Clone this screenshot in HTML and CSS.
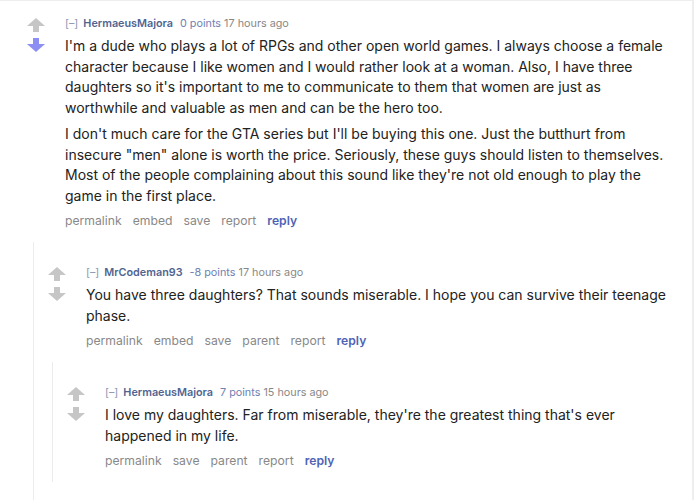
FILE: index.html
```html
<!DOCTYPE html>
<html lang="en">
<head>
	<meta charset="UTF-8"/>
	<title>comments</title>
	<link rel="stylesheet" href="styles.css">
</head>
<body>

<div class="listing">

<div class="comment top">
	<div class="row">
		<div class="midcol">
			<svg class="arrow" viewBox="0 0 18 14"><path class="up" d="M9 0 L18 8 L12 8 L12 14 L6 14 L6 8 L0 8 Z"/></svg>
			<svg class="arrow" viewBox="0 0 18 14"><path class="down voted" d="M6 0 L12 0 L12 6 L18 6 L9 14 L0 6 L6 6 Z"/></svg>
		</div>
		<div class="entry">
			<p class="tagline"><span class="expand">[&ndash;]</span> <a class="author">HermaeusMajora</a> <span class="score">0 points</span> <span class="time">17 hours ago</span></p>
			<div class="md">
				<p>I'm a dude who plays a lot of RPGs and other open world games. I always choose a female character because I like women and I would rather look at a woman. Also, I have three daughters so it's important to me to communicate to them that women are just as worthwhile and valuable as men and can be the hero too.</p>
				<p>I don't much care for the GTA series but I'll be buying this one. Just the butthurt from insecure "men" alone is worth the price. Seriously, these guys should listen to themselves. Most of the people complaining about this sound like they're not old enough to play the game in the first place.</p>
			</div>
			<ul class="buttons">
				<li>permalink</li>
				<li>embed</li>
				<li>save</li>
				<li>report</li>
				<li class="reply">reply</li>
			</ul>
		</div>
	</div>

	<div class="child outer">
		<div class="comment">
			<div class="row">
				<div class="midcol">
					<svg class="arrow" viewBox="0 0 18 14"><path class="up" d="M9 0 L18 8 L12 8 L12 14 L6 14 L6 8 L0 8 Z"/></svg>
					<svg class="arrow" viewBox="0 0 18 14"><path class="down" d="M6 0 L12 0 L12 6 L18 6 L9 14 L0 6 L6 6 Z"/></svg>
				</div>
				<div class="entry">
					<p class="tagline"><span class="expand">[&ndash;]</span> <a class="author">MrCodeman93</a> <span class="score">-8 points</span> <span class="time">17 hours ago</span></p>
					<div class="md">
						<p>You have three daughters? That sounds miserable. I hope you can survive their teenage phase.</p>
					</div>
					<ul class="buttons">
						<li>permalink</li>
						<li>embed</li>
						<li>save</li>
						<li>parent</li>
						<li>report</li>
						<li class="reply">reply</li>
					</ul>
				</div>
			</div>

			<div class="child inner">
				<div class="comment">
					<div class="row">
						<div class="midcol">
							<svg class="arrow" viewBox="0 0 18 14"><path class="up" d="M9 0 L18 8 L12 8 L12 14 L6 14 L6 8 L0 8 Z"/></svg>
							<svg class="arrow" viewBox="0 0 18 14"><path class="down" d="M6 0 L12 0 L12 6 L18 6 L9 14 L0 6 L6 6 Z"/></svg>
						</div>
						<div class="entry">
							<p class="tagline"><span class="expand">[&ndash;]</span> <a class="author">HermaeusMajora</a> <span class="score">7 points</span> <span class="time">15 hours ago</span></p>
							<div class="md">
								<p>I love my daughters. Far from miserable, they're the greatest thing that's ever happened in my life.</p>
							</div>
							<ul class="buttons">
								<li>permalink</li>
								<li>save</li>
								<li>parent</li>
								<li>report</li>
								<li class="reply">reply</li>
							</ul>
						</div>
					</div>
				</div>
			</div>
		</div>
	</div>
</div>

</div>

</body>
</html>
```

FILE: styles.css
```css
html {
	font-family: Inter, "Noto Sans", sans-serif;
}
body {
	margin: 0;
	padding: 0;
	background: #fff;
}
.listing {
	height: 500px;
	box-sizing: border-box;
	border-top: 1px solid #eeeeee;
	border-right: 2px solid #eeeeee;
	overflow: hidden;
}
.comment {
	padding-left: 6px;
}
.comment.top {
	padding-left: 19px;
	padding-top: 15px;
}
.row {
	display: flex;
}
.midcol {
	width: 46px;
	flex: none;
	display: flex;
	flex-direction: column;
	gap: 6px;
	padding-top: 2px;
	padding-left: 8px;
	box-sizing: border-box;
}
.arrow {
	width: 18px;
	height: 14px;
	display: block;
}
.up, .down {
	fill: #c6c6c6;
}
.down.voted {
	fill: #8d8ef3;
}
.entry {
	flex: 1;
	padding-right: 22px;
}
.tagline {
	margin: 0;
	font-size: 10.8px;
	line-height: 15px;
	color: #888;
}
.expand {
	color: #8a96b0;
	margin-right: 2px;
}
.author {
	color: #4f6591;
	font-weight: 600;
	margin-right: 4px;
}
.score {
	color: #6f80b2;
}
.md {
	color: #222;
	font-size: 14px;
	line-height: 20.5px;
	margin-top: 5px;
}
.md p {
	margin: 0 0 6px 0;
}
.buttons {
	list-style: none;
	margin: 0;
	padding: 0;
	display: flex;
	gap: 11px;
	font-size: 12.2px;
	line-height: 18px;
	color: #888;
	margin-top: 4px;
}
.buttons .reply {
	color: #4f63b5;
	font-weight: 600;
}
.child {
	margin-left: 14px;
	border-left: 1px solid #ececec;
	margin-top: 12px;
	padding-top: 23px;
}
.child.outer {
	padding-bottom: 40px;
}
.child.inner {
	margin-left: 12px;
	padding-bottom: 12px;
}
```
